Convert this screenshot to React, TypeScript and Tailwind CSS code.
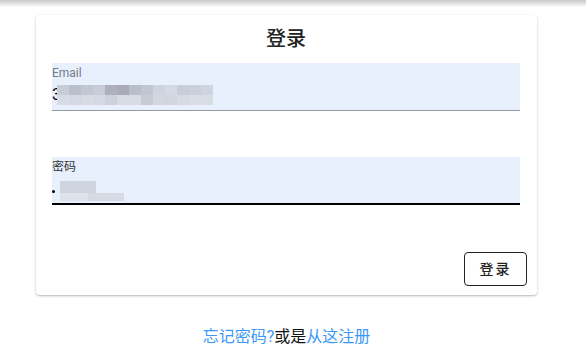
import React from 'react';

const font = { fontFamily: 'Roboto, "Noto Sans CJK SC", sans-serif' };

// blurred value cells, from the reference
const emailTop = ['#c9ccd6', '#b9bfcc', '#c3c7d2', '#c8ccd6', '#aeb1bd', '#a9abb7', '#b9bfc9', '#c1c6d0', '#cfd3dd', '#d5d9e3', '#c9cdd7', '#ccd0da', '#d0d4de'];
const emailBottom = ['#d7dbe5', '#d3d8e2', '#d6dbe4', '#d4d8e2', '#cdd1db', '#d7dbe4', '#d7dbe4', '#c7cbd5', '#d3d7e0', '#d1d5df', '#d6dae3', '#d9dde6', '#d9dde6'];

function Blur({ top, bottom }: { top: string[]; bottom: string[] }) {
  return (
    <div className="flex flex-col">
      <div className="flex">
        {top.map((c, i) => (
          <div key={i} className="w-3 h-[10px]" style={{ background: c }} />
        ))}
      </div>
      <div className="flex">
        {bottom.map((c, i) => (
          <div key={i} className="w-3 h-[10px]" style={{ background: c }} />
        ))}
      </div>
    </div>
  );
}

export default function App() {
  return (
    <div className="min-h-[363px] bg-white" style={font}>
      <div className="h-[7px] bg-gradient-to-b from-[#c8c8c8] to-white" />
      <div className="w-[501px] ml-[36px] mt-[8px]">
        <div className="rounded-[4px] bg-white shadow-[0_1px_3px_rgba(0,0,0,0.2),0_1px_1px_rgba(0,0,0,0.1)] pl-4 pr-[17px] pt-[10px] pb-[9px] flex flex-col">
          <h1 className="text-center text-[20px] font-medium text-[#222] leading-[28px]">登录</h1>
          <div className="mt-[10px] h-[48px] bg-[#e8f0fe] border-b border-[#949aa5] flex flex-col">
            <span className="text-[12px] leading-[16px] text-[#767c88] mt-[2px]">Email</span>
            <div className="flex items-center mt-[4px]">
              <span className="text-[16px] leading-[20px] text-black">3</span>
              <div className="-ml-[4px]">
                <Blur top={emailTop} bottom={emailBottom} />
              </div>
            </div>
          </div>
          <div className="mt-[46px] h-[48px] bg-[#e8f0fe] border-b-2 border-black flex flex-col">
            <span className="text-[12px] leading-[16px] text-[#333] mt-[2px]">密码</span>
            <div className="flex items-center mt-[6px]">
              <span className="w-[3px] h-[3px] rounded-full bg-black mr-[5px]" />
              <div className="flex flex-col">
                <div className="w-[36px] h-[12px] bg-[#cfd4de]" />
                <div className="flex">
                  <div className="w-[28px] h-[8px] bg-[#dde2eb]" />
                  <div className="w-[36px] h-[8px] bg-[#d6dae3]" />
                </div>
              </div>
            </div>
          </div>
          <div className="flex justify-end mt-[47px] -mr-[7px]">
            <button className="w-[63px] h-[34px] rounded-[4px] border border-[#222] text-[14px] text-[#222] font-medium tracking-[2px]">
              登录
            </button>
          </div>
        </div>
        <div className="mt-[32px] text-center text-[16px] leading-[20px]">
          <span className="text-[#3c99f5]">忘记密码?</span>
          <span className="text-[#111]">或是</span>
          <span className="text-[#3c99f5]">从这注册</span>
        </div>
      </div>
    </div>
  );
}
